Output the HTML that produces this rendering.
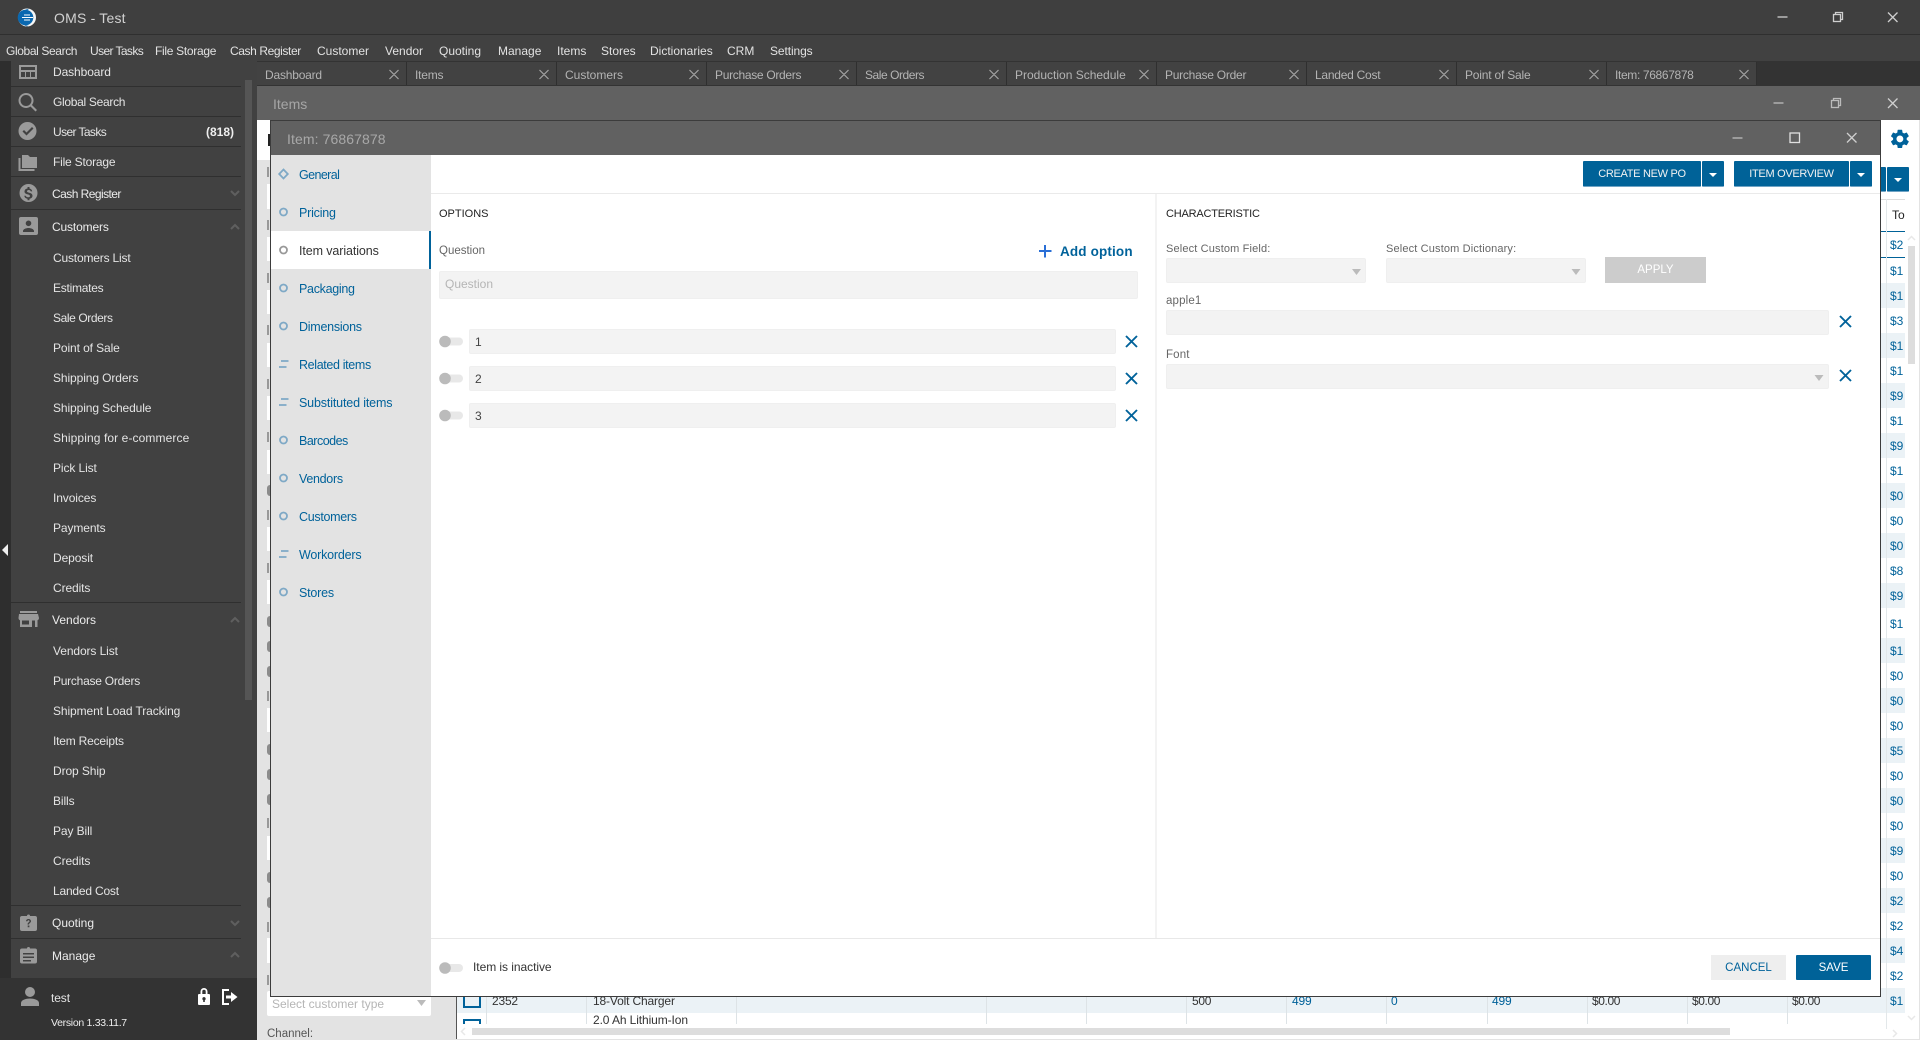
<!DOCTYPE html>
<html><head><meta charset="utf-8"><title>OMS - Test</title>
<style>
html,body{margin:0;padding:0;width:1920px;height:1040px;overflow:hidden;background:#e3e3e3}
body{position:relative;font:12px/16px "Liberation Sans",sans-serif}
.r,.t{position:absolute}
.t{white-space:nowrap}
.m{color:#e2e2e2}
.s{color:#e4e4e4;letter-spacing:-.1px}
.h{color:#ececec}
.tab{position:absolute;top:62px;width:149px;height:23px;background:#424242;border-right:1px solid #2f2f2f;color:#b4b4b4;line-height:27px;text-indent:8px;letter-spacing:-.2px;white-space:nowrap;overflow:hidden}
.n{color:#00629a;left:299px;font-size:12.5px;letter-spacing:-.25px}
.f{background:#f3f3f3;border:1px solid #efefef;border-radius:2px;box-sizing:border-box}
.l{color:#666;font-size:11.5px;letter-spacing:.15px}
.b{background:#006298;color:#f2f2f2;text-align:center;border-radius:1px;border-bottom:1px solid #6fa3c4;box-sizing:border-box;line-height:27px;font-size:11px;letter-spacing:-.3px}
.sep{position:absolute;left:11px;width:230px;height:1px;background:#2f2f2f}
.v{color:#00629a;left:1890px;font-size:12px}
.hl{position:absolute;left:1881px;width:24px;height:25px;background:#ebf2f6}
.g{background:#fff;position:absolute;left:267px;width:3px}
.lb{position:absolute;left:267px;width:2px;height:10px;background:#999}
.c{position:absolute;left:267px;width:3px;height:11px;background:#8c8c8c;border-radius:6px 0 0 6px}
</style></head><body>

<!-- window chrome -->
<div class="r" style="left:0;top:0;width:1920px;height:34px;background:#3f3f3f"></div>
<div class="r" style="left:0;top:34px;width:1920px;height:1px;background:#2f2f2f"></div>
<div class="r" style="left:0;top:35px;width:1920px;height:26px;background:#414141"></div>
<div class="r" style="left:0;top:61px;width:1920px;height:25px;background:#333"></div>
<div class="t" style="left:54px;top:10px;font-size:14px;color:#d2d2d2;letter-spacing:.2px">OMS - Test</div>

<div class="t m" style="left:6px;top:43px;letter-spacing:-.38px">Global Search</div>
<div class="t m" style="left:90px;top:43px;letter-spacing:-.6px">User Tasks</div>
<div class="t m" style="left:155px;top:43px;letter-spacing:-.3px">File Storage</div>
<div class="t m" style="left:230px;top:43px;letter-spacing:-.4px">Cash Register</div>
<div class="t m" style="left:317px;top:43px">Customer</div>
<div class="t m" style="left:385px;top:43px">Vendor</div>
<div class="t m" style="left:439px;top:43px">Quoting</div>
<div class="t m" style="left:498px;top:43px">Manage</div>
<div class="t m" style="left:557px;top:43px">Items</div>
<div class="t m" style="left:601px;top:43px">Stores</div>
<div class="t m" style="left:650px;top:43px">Dictionaries</div>
<div class="t m" style="left:727px;top:43px">CRM</div>
<div class="t m" style="left:770px;top:43px;letter-spacing:-.1px">Settings</div>

<!-- sidebar -->
<div class="r" style="left:0;top:61px;width:11px;height:979px;background:#2e2e2e"></div>
<div class="r" style="left:11px;top:61px;width:246px;height:917px;background:#414141"></div>
<div class="r" style="left:245px;top:80px;width:7px;height:620px;background:#555"></div>
<div class="r" style="left:0;top:978px;width:257px;height:62px;background:#333"></div>
<div class="sep" style="top:86px"></div><div class="sep" style="top:116px"></div><div class="sep" style="top:146px"></div><div class="sep" style="top:176px"></div><div class="sep" style="top:209px"></div><div class="sep" style="top:602px"></div><div class="sep" style="top:905px"></div><div class="sep" style="top:938px"></div>

<div class="t s" style="left:53px;top:64px">Dashboard</div>
<div class="t s" style="left:53px;top:94px;letter-spacing:-.3px">Global Search</div>
<div class="t s" style="left:53px;top:124px;letter-spacing:-.6px">User Tasks</div>
<div class="t" style="left:206px;top:124px;color:#eee;font-weight:bold">(818)</div>
<div class="t s" style="left:53px;top:154px;letter-spacing:-.2px">File Storage</div>
<div class="t h" style="left:52px;top:186px;letter-spacing:-.55px">Cash Register</div>
<div class="t h" style="left:52px;top:219px;letter-spacing:-.15px">Customers</div>
<div class="t s" style="left:53px;top:250px;letter-spacing:-.18px">Customers List</div>
<div class="t s" style="left:53px;top:280px;letter-spacing:-.25px">Estimates</div>
<div class="t s" style="left:53px;top:310px;letter-spacing:-.4px">Sale Orders</div>
<div class="t s" style="left:53px;top:340px">Point of Sale</div>
<div class="t s" style="left:53px;top:370px">Shipping Orders</div>
<div class="t s" style="left:53px;top:400px">Shipping Schedule</div>
<div class="t s" style="left:53px;top:430px;letter-spacing:.1px">Shipping for e-commerce</div>
<div class="t s" style="left:53px;top:460px">Pick List</div>
<div class="t s" style="left:53px;top:490px">Invoices</div>
<div class="t s" style="left:53px;top:520px">Payments</div>
<div class="t s" style="left:53px;top:550px">Deposit</div>
<div class="t s" style="left:53px;top:580px">Credits</div>
<div class="t h" style="left:52px;top:612px">Vendors</div>
<div class="t s" style="left:53px;top:643px">Vendors List</div>
<div class="t s" style="left:53px;top:673px;letter-spacing:-.25px">Purchase Orders</div>
<div class="t s" style="left:53px;top:703px">Shipment Load Tracking</div>
<div class="t s" style="left:53px;top:733px;letter-spacing:-.2px">Item Receipts</div>
<div class="t s" style="left:53px;top:763px">Drop Ship</div>
<div class="t s" style="left:53px;top:793px">Bills</div>
<div class="t s" style="left:53px;top:823px">Pay Bill</div>
<div class="t s" style="left:53px;top:853px">Credits</div>
<div class="t s" style="left:53px;top:883px;letter-spacing:-.2px">Landed Cost</div>
<div class="t h" style="left:52px;top:915px">Quoting</div>
<div class="t h" style="left:52px;top:948px">Manage</div>
<div class="t s" style="left:51px;top:990px">test</div>
<div class="t" style="left:51px;top:1015px;color:#eee;font-size:10.5px;letter-spacing:-.3px">Version 1.33.11.7</div>

<!-- tabs -->
<div class="tab" style="left:257px">Dashboard</div>
<div class="tab" style="left:407px">Items</div>
<div class="tab" style="left:557px;letter-spacing:0">Customers</div>
<div class="tab" style="left:707px;letter-spacing:-.3px">Purchase Orders</div>
<div class="tab" style="left:857px;letter-spacing:-.45px">Sale Orders</div>
<div class="tab" style="left:1007px;letter-spacing:0">Production Schedule</div>
<div class="tab" style="left:1157px;letter-spacing:-.25px">Purchase Order</div>
<div class="tab" style="left:1307px;letter-spacing:-.25px">Landed Cost</div>
<div class="tab" style="left:1457px;letter-spacing:-.2px">Point of Sale</div>
<div class="tab" style="left:1607px;letter-spacing:-.35px">Item: 76867878</div>

<!-- items window -->
<div class="r" style="left:257px;top:86px;width:1663px;height:34px;background:#616161"></div>
<div class="t" style="left:273px;top:96px;font-size:14px;color:#a6a6a6">Items</div>
<div class="r" style="left:257px;top:120px;width:1663px;height:920px;background:#e3e3e3"></div>
<div class="r" style="left:257px;top:120px;width:13px;height:40px;background:#fff"></div>
<div class="r" style="left:268px;top:134px;width:2px;height:12px;background:#222"></div>
<div class="g" style="top:184px;height:25px"></div><div class="g" style="top:237px;height:24px"></div><div class="g" style="top:290px;height:24px"></div><div class="g" style="top:343px;height:24px"></div><div class="g" style="top:396px;height:24px"></div><div class="g" style="top:450px;height:24px"></div><div class="g" style="top:527px;height:24px"></div><div class="g" style="top:580px;height:24px"></div><div class="g" style="top:708px;height:24px"></div><div class="g" style="top:836px;height:24px"></div><div class="g" style="top:938px;height:25px"></div>
<div class="lb" style="top:167px"></div><div class="lb" style="top:220px"></div><div class="lb" style="top:273px"></div><div class="lb" style="top:325px"></div><div class="lb" style="top:379px"></div><div class="lb" style="top:432px"></div><div class="lb" style="top:510px"></div><div class="lb" style="top:563px"></div><div class="lb" style="top:691px"></div><div class="lb" style="top:818px"></div><div class="lb" style="top:922px"></div><div class="lb" style="top:975px"></div>
<div class="c" style="top:485px"></div><div class="c" style="top:616px"></div><div class="c" style="top:641px"></div><div class="c" style="top:666px"></div><div class="c" style="top:744px"></div><div class="c" style="top:769px"></div><div class="c" style="top:794px"></div><div class="c" style="top:872px"></div><div class="c" style="top:897px"></div>

<!-- right background -->
<div class="r" style="left:1880px;top:120px;width:40px;height:920px;background:#fff"></div>
<div class="r" style="left:1919px;top:120px;width:1px;height:920px;background:#e3e3e3"></div>
<div class="r b" style="left:1880px;top:167px;width:6px;height:25px"></div>
<div class="r b" style="left:1887px;top:167px;width:22px;height:25px"></div>
<div class="t" style="left:1892px;top:207px;color:#222">To</div>
<div class="r" style="left:1881px;top:199px;width:24px;height:1px;background:#ddd"></div>
<div class="r" style="left:1881px;top:231px;width:24px;height:1px;background:#006298"></div>
<div class="r" style="left:1881px;top:257px;width:24px;height:1px;background:#006298"></div>
<div class="hl" style="top:283px"></div><div class="hl" style="top:333px"></div><div class="hl" style="top:383px"></div><div class="hl" style="top:433px"></div><div class="hl" style="top:483px"></div><div class="hl" style="top:533px"></div><div class="hl" style="top:583px"></div><div class="hl" style="top:638px"></div><div class="hl" style="top:688px"></div><div class="hl" style="top:738px"></div><div class="hl" style="top:788px"></div><div class="hl" style="top:838px"></div><div class="hl" style="top:888px"></div><div class="hl" style="top:938px"></div><div class="hl" style="top:988px"></div>
<div class="r" style="left:1886px;top:199px;width:1px;height:830px;background:#e3e8ea"></div>
<div class="t v" style="top:237px">$2</div><div class="t v" style="top:263px">$1</div><div class="t v" style="top:288px">$1</div><div class="t v" style="top:313px">$3</div><div class="t v" style="top:338px">$1</div><div class="t v" style="top:363px">$1</div><div class="t v" style="top:388px">$9</div><div class="t v" style="top:413px">$1</div><div class="t v" style="top:438px">$9</div><div class="t v" style="top:463px">$1</div><div class="t v" style="top:488px">$0</div><div class="t v" style="top:513px">$0</div><div class="t v" style="top:538px">$0</div><div class="t v" style="top:563px">$8</div><div class="t v" style="top:588px">$9</div><div class="t v" style="top:616px">$1</div><div class="t v" style="top:643px">$1</div><div class="t v" style="top:668px">$0</div><div class="t v" style="top:693px">$0</div><div class="t v" style="top:718px">$0</div><div class="t v" style="top:743px">$5</div><div class="t v" style="top:768px">$0</div><div class="t v" style="top:793px">$0</div><div class="t v" style="top:818px">$0</div><div class="t v" style="top:843px">$9</div><div class="t v" style="top:868px">$0</div><div class="t v" style="top:893px">$2</div><div class="t v" style="top:918px">$2</div><div class="t v" style="top:943px">$4</div><div class="t v" style="top:968px">$2</div><div class="t v" style="top:993px">$1</div>
<div class="r" style="left:1908px;top:246px;width:7px;height:118px;background:#ddd"></div>

<!-- bottom table behind -->
<div class="r" style="left:267px;top:991px;width:164px;height:25px;background:#fff;border-radius:2px"></div>
<div class="t" style="left:272px;top:996px;color:#b5b5b5">Select customer type</div>
<div class="t" style="left:267px;top:1026px;color:#555;font-size:11.5px">Channel:</div>
<div class="r" style="left:456px;top:996px;width:1425px;height:44px;background:#fff;border-left:1px solid #555;box-sizing:border-box"></div>
<div class="r" style="left:457px;top:996px;width:1424px;height:17px;background:#ebf2f6"></div>
<div class="r" style="left:463px;top:996px;width:18px;height:12px;border:2px solid #00629a;border-top:0;box-sizing:border-box;background:#ebf2f6"></div>
<div class="r" style="left:463px;top:1019px;width:18px;height:6px;border:2px solid #00629a;border-bottom:0;box-sizing:border-box"></div>
<div class="t" style="left:492px;top:993px;color:#333;letter-spacing:-.2px">2352</div>
<div class="t" style="left:593px;top:993px;color:#333;letter-spacing:-.15px">18-Volt Charger</div>
<div style="position:absolute;left:593px;top:1012px;height:12px;overflow:hidden;color:#333;white-space:nowrap;line-height:16px;letter-spacing:-.1px">2.0 Ah Lithium-Ion</div>
<div class="r" style="left:457px;top:1024px;width:1424px;height:16px;background:#fff"></div>
<div class="t" style="left:1192px;top:993px;color:#333;letter-spacing:-.3px">500</div>
<div class="t v" style="left:1292px;top:993px;letter-spacing:-.2px">499</div>
<div class="t v" style="left:1391px;top:993px">0</div>
<div class="t v" style="left:1492px;top:993px;letter-spacing:-.2px">499</div>
<div class="t" style="left:1592px;top:993px;color:#333;letter-spacing:-.4px">$0.00</div>
<div class="t" style="left:1692px;top:993px;color:#333;letter-spacing:-.4px">$0.00</div>
<div class="t" style="left:1792px;top:993px;color:#333;letter-spacing:-.4px">$0.00</div>
<div class="r" style="left:486px;top:996px;width:1px;height:28px;background:#dde3e6"></div><div class="r" style="left:586px;top:996px;width:1px;height:28px;background:#dde3e6"></div><div class="r" style="left:736px;top:996px;width:1px;height:28px;background:#dde3e6"></div><div class="r" style="left:986px;top:996px;width:1px;height:28px;background:#dde3e6"></div><div class="r" style="left:1086px;top:996px;width:1px;height:28px;background:#dde3e6"></div><div class="r" style="left:1186px;top:996px;width:1px;height:28px;background:#dde3e6"></div><div class="r" style="left:1286px;top:996px;width:1px;height:28px;background:#dde3e6"></div><div class="r" style="left:1386px;top:996px;width:1px;height:28px;background:#dde3e6"></div><div class="r" style="left:1487px;top:996px;width:1px;height:28px;background:#dde3e6"></div><div class="r" style="left:1587px;top:996px;width:1px;height:28px;background:#dde3e6"></div><div class="r" style="left:1687px;top:996px;width:1px;height:28px;background:#dde3e6"></div><div class="r" style="left:1787px;top:996px;width:1px;height:28px;background:#dde3e6"></div>
<div class="r" style="left:472px;top:1028px;width:1258px;height:7px;background:#ddd"></div>
<div class="r" style="left:456px;top:1039px;width:1464px;height:1px;background:#e3e3e3"></div>

<!-- modal -->
<div class="r" style="left:270px;top:120px;width:1611px;height:877px;background:#fff;border:1px solid #3c3c3c;box-sizing:border-box"></div>
<div class="r" style="left:271px;top:121px;width:1609px;height:34px;background:#616161"></div>
<div class="t" style="left:287px;top:131px;font-size:14px;color:#a8a8a8;letter-spacing:.1px">Item: 76867878</div>
<div class="r" style="left:271px;top:155px;width:160px;height:841px;background:#e3e3e3"></div>
<div class="r" style="left:271px;top:231px;width:160px;height:38px;background:#fff"></div>
<div class="r" style="left:429px;top:231px;width:2px;height:38px;background:#00629a"></div>

<div class="t n" style="top:167px;letter-spacing:-.6px">General</div>
<div class="t n" style="top:205px;letter-spacing:-.2px">Pricing</div>
<div class="t n" style="top:243px;color:#333;letter-spacing:-.1px">Item variations</div>
<div class="t n" style="top:281px;letter-spacing:-.3px">Packaging</div>
<div class="t n" style="top:319px">Dimensions</div>
<div class="t n" style="top:357px;letter-spacing:-.35px">Related items</div>
<div class="t n" style="top:395px;letter-spacing:-.15px">Substituted items</div>
<div class="t n" style="top:433px;letter-spacing:-.5px">Barcodes</div>
<div class="t n" style="top:471px;letter-spacing:-.3px">Vendors</div>
<div class="t n" style="top:509px;letter-spacing:-.3px">Customers</div>
<div class="t n" style="top:547px;letter-spacing:-.2px">Workorders</div>
<div class="t n" style="top:585px;letter-spacing:-.2px">Stores</div>

<!-- toolbar -->
<div class="r" style="left:431px;top:193px;width:1449px;height:1px;background:#eaeaea"></div>
<div class="r b" style="left:1583px;top:161px;width:118px;height:26px">CREATE NEW PO</div>
<div class="r b" style="left:1702px;top:161px;width:22px;height:26px"></div>
<div class="r b" style="left:1734px;top:161px;width:115px;height:26px">ITEM OVERVIEW</div>
<div class="r b" style="left:1850px;top:161px;width:22px;height:26px"></div>

<!-- options -->
<div class="t" style="left:439px;top:205.500px;color:#222;font-size:11px">OPTIONS</div>
<div class="t l" style="left:439px;top:243px;letter-spacing:0">Question</div>
<div class="t" style="left:1060px;top:244px;color:#00629a;font-size:13.5px;font-weight:bold;letter-spacing:.15px">Add option</div>
<div class="r f" style="left:439px;top:271px;width:699px;height:28px"></div>
<div class="t" style="left:445px;top:276px;color:#b5b5b5">Question</div>
<div class="r f" style="left:469px;top:329px;width:647px;height:25px"></div>
<div class="r f" style="left:469px;top:366px;width:647px;height:25px"></div>
<div class="r f" style="left:469px;top:403px;width:647px;height:25px"></div>
<div class="t" style="left:475px;top:334px;color:#444">1</div>
<div class="t" style="left:475px;top:371px;color:#444">2</div>
<div class="t" style="left:475px;top:408px;color:#444">3</div>

<div class="r" style="left:1155px;top:194px;width:2px;height:744px;background:#f3f3f3"></div>
<div class="r" style="left:431px;top:938px;width:1449px;height:1px;background:#e8e8e8"></div>

<!-- characteristic -->
<div class="t" style="left:1166px;top:205.500px;color:#222;font-size:11px;letter-spacing:-.2px">CHARACTERISTIC</div>
<div class="t l" style="left:1166px;top:241px;font-size:11px">Select Custom Field:</div>
<div class="t l" style="left:1386px;top:241px;font-size:11px">Select Custom Dictionary:</div>
<div class="r f" style="left:1166px;top:258px;width:200px;height:25px"></div>
<div class="r f" style="left:1386px;top:258px;width:200px;height:25px"></div>
<div class="r" style="left:1605px;top:257px;width:101px;height:26px;background:#ccc;color:#fff;text-align:center;line-height:26px;font-size:11.5px">APPLY</div>
<div class="t l" style="left:1166px;top:293px">apple1</div>
<div class="r f" style="left:1166px;top:310px;width:663px;height:25px"></div>
<div class="t l" style="left:1166px;top:347px">Font</div>
<div class="r f" style="left:1166px;top:364px;width:663px;height:25px"></div>

<!-- footer -->
<div class="t" style="left:473px;top:959px;color:#333;letter-spacing:-.05px">Item is inactive</div>
<div class="r" style="left:1711px;top:955px;width:75px;height:25px;background:#eee;color:#00629a;text-align:center;line-height:26px;font-size:11.5px">CANCEL</div>
<div class="r" style="left:1796px;top:955px;width:75px;height:25px;background:#006298;color:#fff;text-align:center;line-height:26px;border-radius:1px;font-size:11.5px">SAVE</div>

<!-- icon layer -->
<svg width="1920" height="1040" viewBox="0 0 1920 1040" style="position:absolute;left:0;top:0">
<!-- logo -->
<circle cx="27" cy="17.500" r="9" fill="#f6f6f6"/>
<circle cx="25.500" cy="17.500" r="7.800" fill="#0a68b0"/>
<path d="M29 8.800a9 9 0 0 0-2 17.600l2-.6a8 8 0 0 1-1-16z" fill="#0a68b0"/>
<path d="M24 15h6M22 17.500h11M24 20h6" stroke="#fff" stroke-width="1.100"/>

<!-- window controls -->
<g stroke="#cfcfcf" stroke-width="1.300" fill="none">
<path d="M1777.500 17h10"/><rect x="1833.500" y="14.500" width="7" height="7"/><path d="M1835.500 14.500v-2h7v7h-2"/><path d="M1888 12.500l9.500 9.500M1897.500 12.500l-9.500 9.500"/>
<path d="M1773.500 103h10" stroke="#bbb"/><rect x="1831.500" y="100.500" width="7" height="7" stroke="#bbb"/><path d="M1833.500 100.500v-2h7v7h-2" stroke="#bbb"/><path d="M1888 98.500l9.500 9.500M1897.500 98.500l-9.500 9.500"/>
<path d="M1732.500 138h10" stroke="#bbb"/><rect x="1790" y="133" width="9.500" height="9.500" stroke="#e0e0e0"/><path d="M1847 133l9.500 9.500M1856.500 133l-9.500 9.500"/>
</g>
<!-- tab close -->
<g stroke="#a8a8a8" stroke-width="1.100" fill="none">
<path d="M389.500 70l9 9M398.500 70l-9 9M539.500 70l9 9M548.500 70l-9 9M689.500 70l9 9M698.500 70l-9 9M839.500 70l9 9M848.500 70l-9 9M989.500 70l9 9M998.500 70l-9 9M1139.500 70l9 9M1148.500 70l-9 9M1289.500 70l9 9M1298.500 70l-9 9M1439.500 70l9 9M1448.500 70l-9 9M1589.500 70l9 9M1598.500 70l-9 9M1739.500 70l9 9M1748.500 70l-9 9"/>
</g>

<!-- sidebar icons -->
<g fill="#9a9a9a">
<path fill-rule="evenodd" d="M19 65h18v14H19zM21 67v3h14v-3zM21 72v5h4v-5zM26 72v5h4v-5zM31 72v5h4v-5z"/>
<path fill-rule="evenodd" d="M26 93a7.500 7.500 0 0 1 6 12l5 5-1.500 1.500-5-5A7.500 7.500 0 1 1 26 93zm0 2a5.500 5.500 0 1 0 0 11 5.500 5.500 0 0 0 0-11z"/>
<path fill-rule="evenodd" d="M27.500 122a9 9 0 1 1 0 18 9 9 0 0 1 0-18zM22.500 131.500l4 4 7-7-1.500-1.500-5.500 5.500-2.500-2.500z"/>
<path d="M22 155h6l2 2h7v11H22zM18.500 158h2v11h14v2h-16z"/>
<path fill-rule="evenodd" d="M28.500 184a9 9 0 1 1 0 18 9 9 0 0 1 0-18zM27.500 187v1.500c-2 .3-3 1.500-3 3 0 3.500 5.500 2.300 5.500 4.500 0 1-1 1.300-2 1.300s-2-.5-2.200-1.500h-1.500c.2 1.800 1.500 2.700 3.200 3v1.500h2v-1.500c1.800-.3 3-1.400 3-3 0-3.700-5.500-2.500-5.500-4.500 0-.8.800-1.300 1.800-1.300s1.700.5 1.900 1.400h1.500c-.1-1.600-1.300-2.600-2.700-2.900V187z"/>
<path fill-rule="evenodd" d="M21 217h15a2 2 0 0 1 2 2v14a2 2 0 0 1-2 2H21a2 2 0 0 1-2-2v-14a2 2 0 0 1 2-2zM28.500 220.500a2.800 2.800 0 1 0 0 5.600 2.800 2.800 0 0 0 0-5.600zM23 232v-1c0-2 3.500-3 5.500-3s5.500 1 5.500 3v1z"/>
<path fill-rule="evenodd" d="M20 611h17v2H20zM19 614h19l1 4c0 1.300-.8 2-1.500 2.200V627H20v-6.800c-.7-.2-1.500-.9-1.500-2.200zM22 620.500v4h7v-4zM32 620.500v6.500h3v-6.500z"/>
<path fill-rule="evenodd" d="M22 916h5a1.500 1.500 0 0 1 3 0h5a2 2 0 0 1 2 2v11a2 2 0 0 1-2 2H22a2 2 0 0 1-2-2v-11a2 2 0 0 1 2-2zM28.500 919c-1.500 0-2.500 1-2.500 2.300h1.500c0-.5.400-1 1-1 .7 0 1 .5 1 1 0 1-2 1.200-2 3.200h1.500c0-1.400 2-1.700 2-3.200 0-1.300-1-2.300-2.500-2.300zM27.700 925.500v1.700h1.700v-1.700z"/>
<path fill-rule="evenodd" d="M22 948.500h5a1.500 1.500 0 0 1 3 0h5a2 2 0 0 1 2 2v11a2 2 0 0 1-2 2H22a2 2 0 0 1-2-2v-11a2 2 0 0 1 2-2zM23 953v1.500h11V953zM23 956.500v1.500h11v-1.500zM23 960v1.500h8V960z"/>
<circle cx="30" cy="992" r="5"/>
<path d="M21 1006v-3c0-3 5-4.500 9-4.500s9 1.500 9 4.500v3z"/>
</g>
<g stroke="#5f5f5f" stroke-width="2" fill="none">
<path d="M231 191l4 4 4-4M231 229l4-4 4 4M231 622l4-4 4 4M231 921l4 4 4-4M231 957l4-4 4 4"/>
</g>
<path d="M8 544v12l-6-6z" fill="#f0f0f0"/>
<!-- lock / logout -->
<path fill="#fff" fill-rule="evenodd" d="M199 994h1.500v-2.500a3.500 3.500 0 0 1 7 0v2.500h1.500a1 1 0 0 1 1 1v9a1 1 0 0 1-1 1h-10a1 1 0 0 1-1-1v-9a1 1 0 0 1 1-1zM202.300 994h3.400v-2.500a1.700 1.700 0 0 0-3.400 0zM204 997a1.700 1.700 0 0 0-.8 3.200v1.800h1.600v-1.800A1.700 1.700 0 0 0 204 997z"/>
<path d="M229 990h-6v14h6" fill="none" stroke="#fff" stroke-width="2"/>
<path d="M226 995.500h5v-3.500l6.500 5-6.500 5v-3.500h-5z" fill="#fff"/>

<!-- nav icons -->
<path d="M283.500 169.500l4.300 4.500-4.300 4.500-4.300-4.500z" fill="none" stroke="#7fa9c6" stroke-width="1.800"/>
<g fill="none" stroke="#7fa9c6" stroke-width="1.800">
<circle cx="283.500" cy="212" r="3.500"/>
<circle cx="283.500" cy="288" r="3.500"/><circle cx="283.500" cy="326" r="3.500"/>
<circle cx="283.500" cy="440" r="3.500"/><circle cx="283.500" cy="478" r="3.500"/><circle cx="283.500" cy="516" r="3.500"/><circle cx="283.500" cy="592" r="3.500"/>
<path d="M281 361h7.500M279 367h7.500M281 399h7.500M279 405h7.500M281 551h7.500M279 557h7.500"/>
</g>
<circle cx="283.500" cy="250" r="3.500" fill="none" stroke="#999" stroke-width="1.800"/>

<!-- toggles -->
<g>
<rect x="441" y="337.500" width="22" height="8" rx="4" fill="#e8e8e8"/><circle cx="445" cy="341.500" r="5.800" fill="#bbb"/>
<rect x="441" y="374.500" width="22" height="8" rx="4" fill="#e8e8e8"/><circle cx="445" cy="378.500" r="5.800" fill="#bbb"/>
<rect x="441" y="411.500" width="22" height="8" rx="4" fill="#e8e8e8"/><circle cx="445" cy="415.500" r="5.800" fill="#bbb"/>
<rect x="441" y="964" width="22" height="8" rx="4" fill="#e8e8e8"/><circle cx="445" cy="968" r="5.800" fill="#bbb"/>
</g>
<!-- X + plus -->
<g stroke="#00629a" stroke-width="1.900" fill="none">
<path d="M1126 336l11 11M1137 336l-11 11M1126 373l11 11M1137 373l-11 11M1126 410l11 11M1137 410l-11 11M1840 316l11 11M1851 316l-11 11M1840 370l11 11M1851 370l-11 11"/>
</g>
<path d="M1045 245v12.500M1039 251h12.500" stroke="#2a6fd6" stroke-width="2" fill="none"/>
<!-- select arrows -->
<g fill="#bbb">
<path d="M1352 269h9l-4.500 6zM1571.500 269h9l-4.500 6zM1814.500 375h9l-4.500 6z"/>
<path d="M417 1000h9l-4.500 6z"/>
</g>
<!-- button arrows -->
<g fill="#fff">
<path d="M1709 173h8l-4 4zM1857 173h8l-4 4zM1894 178h8l-4 4z"/>
</g>
<!-- gear -->
<g transform="translate(1888.500,127.500) scale(.95)" fill="#00629a"><path d="M19.14 12.94c.04-.3.06-.61.06-.94 0-.32-.02-.64-.07-.94l2.030-1.580a.49.49 0 0 0 .12-.61l-1.920-3.320a.488.488 0 0 0-.59-.22l-2.390.96c-.5-.38-1.030-.7-1.620-.94l-.36-2.540a.484.484 0 0 0-.48-.41h-3.840c-.24 0-.43.17-.47.41l-.36 2.540c-.59.24-1.130.57-1.620.94l-2.390-.96c-.22-.08-.47 0-.59.22L2.740 8.870c-.12.21-.08.47.12.61l2.030 1.580c-.05.3-.09.63-.09.94s.02.64.07.94l-2.030 1.580a.49.49 0 0 0-.12.61l1.920 3.320c.12.22.37.29.59.22l2.390-.96c.5.38 1.030.7 1.620.94l.36 2.540c.05.24.24.41.48.41h3.840c.24 0 .44-.17.47-.41l.36-2.540c.59-.24 1.130-.56 1.620-.94l2.390.96c.22.08.47 0 .59-.22l1.920-3.320c.12-.22.07-.47-.12-.61l-2.010-1.580zM12 15.600c-1.980 0-3.600-1.620-3.600-3.600s1.620-3.600 3.600-3.600 3.600 1.620 3.600 3.600-1.620 3.600-3.600 3.600z"/></g>
<!-- small scroll arrows -->
<g stroke="#e8e8e8" stroke-width="1.500" fill="none">
<path d="M1908 240l3.500-3.500 3.500 3.500M1908 1016l3.500 3.500 3.500-3.500M1893 1030l3.500 3.500-3.500 3.500M465 1028l-3.500 3.500 3.500 3.500"/>
</g>
</svg>
</body></html>
